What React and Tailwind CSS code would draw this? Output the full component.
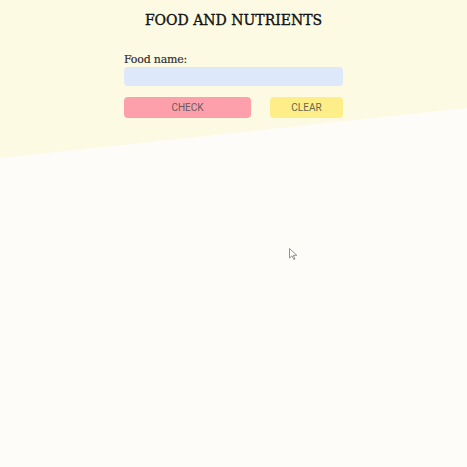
import React, { useState } from 'react';

const App = () => {
  const [food, setFood] = useState('');

  return (
    <div className="relative min-h-[467px] w-full overflow-hidden bg-[#fefcf8]">
      {/* slanted yellow band */}
      <div className="absolute inset-x-0 top-0 h-[158px] bg-[#fdfae3] [clip-path:polygon(0_0,100%_0,100%_108px,0_158px)]" />

      <div className="relative flex flex-col items-center pt-[11px]">
        <h1 className="text-[14px] leading-[18px] text-[#111] font-['DejaVu_Serif',serif] [-webkit-text-stroke:0.35px_#111]">
          FOOD AND NUTRIENTS
        </h1>

        <div className="mt-[24px] w-[219px]">
          <label className="block text-[11px] leading-[14px] text-[#2a2a2a] font-['DejaVu_Serif',serif] tracking-[-0.2px] [-webkit-text-stroke:0.15px_#2a2a2a]">
            Food name:
          </label>
          <input
            type="text"
            value={food}
            onChange={e => setFood(e.target.value)}
            className="block h-[19px] w-full rounded-[4px] bg-[#dde8fb] px-2 text-[11px] outline-none"
          />
          <div className="mt-[11px] flex justify-between">
            <button className="h-[21px] w-[127px] rounded-[4px] bg-[#fda0ab] text-[10px] text-[#6b5a5c] font-['Roboto',sans-serif]">
              CHECK
            </button>
            <button className="h-[21px] w-[73px] rounded-[4px] bg-[#fdee88] text-[10px] text-[#6b6450] font-['Roboto',sans-serif]">
              CLEAR
            </button>
          </div>
        </div>
      </div>

      {/* mouse pointer */}
      <svg className="absolute left-[289px] top-[248px]" width="9" height="13" viewBox="0 0 9 13">
        <path d="M0.5 0.5 L0.5 10 L3 7.8 L4.8 11.5 L6 11 L4.4 7.3 L7.8 7.3 Z" fill="#fff" stroke="#777" strokeWidth="0.8" />
      </svg>
    </div>
  );
};

export default App;
